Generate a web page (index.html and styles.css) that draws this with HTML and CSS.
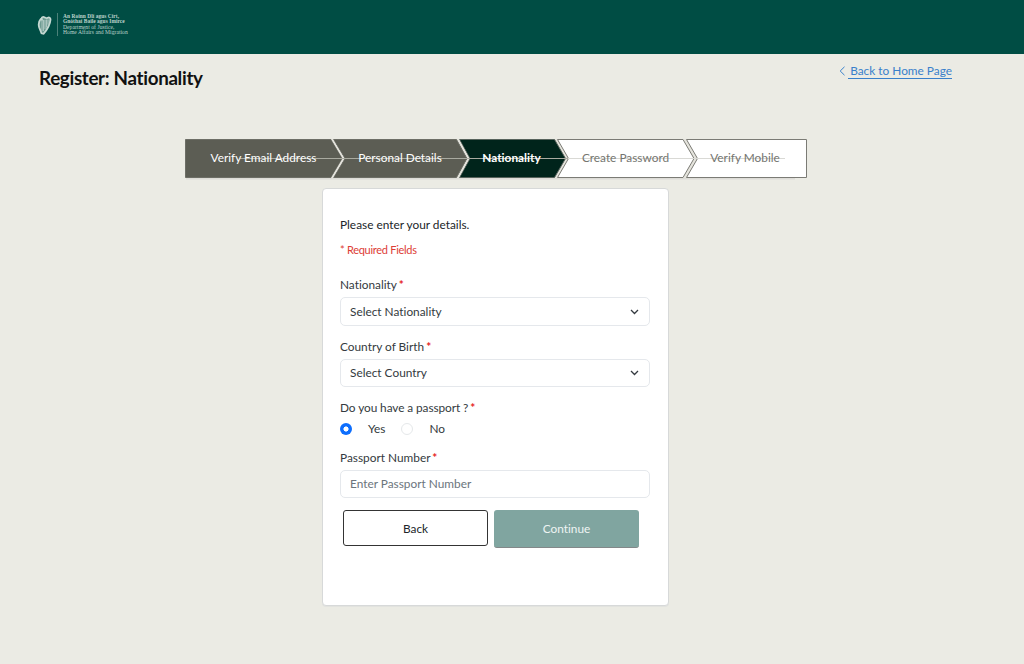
FILE: index.html
```html
<!DOCTYPE html>
<html lang="en">
<head>
<meta charset="utf-8">
<title>Register: Nationality</title>
<link rel="stylesheet" href="styles.css">
</head>
<body>
<header class="topbar">
  <svg class="harp" width="16" height="20" viewBox="0 0 16 20" aria-hidden="true">
    <path class="harp-frame" d="M4 3.500C1.800 6 1.300 9.500 2.200 12.500L4.500 18.300L6.500 18.800C9 16 13 10.500 13.500 4.600C13.600 2.700 12 2 10.800 2.800C9 4 7.200 1.300 5.700 2C4.300 2.500 4.300 4.500 5.500 5.200"/>
    <path class="harp-strings" d="M5 5v11M6.500 5v11M8 5v9M9.500 4.500v8M11 4.500v5"/>
  </svg>
  <span class="divider"></span>
  <div class="department">
    <b>An Roinn Dlí agus Cirt,</b>
    <b>Gnóthaí Baile agus Imirce</b>
    <span>Department of Justice,</span>
    <span>Home Affairs and Migration</span>
  </div>
</header>
<div class="heading">
  <h1>Register: Nationality</h1>
  <a class="home-link"><svg width="7" height="10" viewBox="0 0 7 10"><path d="M5.500 .8L1.200 5L5.500 9.200"/></svg><span>Back to Home Page</span></a>
</div>
<main>
  <ol class="steps">
    <svg class="steps-shape" width="622" height="42" viewBox="0 0 622 42" aria-hidden="true">
      <path class="shadow" d="M1 39.500H610"/>
      <path class="gap" d="M0 0H621V39H0Z"/>
      <path class="done" d="M.5 .5H146L157.500 19.500L146 38.500H.5Z"/>
      <path class="done" d="M148.500 .5H271.500L282 19.500L271.500 38.500H148.500L160 19.500Z"/>
      <path class="current" d="M274.500 .5H369.500L380.500 19.500L369.500 38.500H274.500L285 19.500Z"/>
      <path class="todo" d="M372.500 .5H498L509 19.500L498 38.500H372.500L383.500 19.500Z"/>
      <path class="todo" d="M501.500 .5H621.500V38.500H501.500L512.500 19.500Z"/>
      <path class="separator" d="M147 0L158.500 19.500L147 39M273 0L283.500 19.500L273 39"/>
      <path class="track" d="M55 19.500H383"/>
      <path class="track faint" d="M383 19.500H600"/>
    </svg>
    <li>Verify Email Address</li>
    <li>Personal Details</li>
    <li class="active">Nationality</li>
    <li class="next">Create Password</li>
    <li class="next">Verify Mobile</li>
  </ol>
  <form class="card">
    <p class="intro">Please enter your details.</p>
    <p class="required">* Required Fields</p>
    <label class="label">Nationality <i>*</i></label>
    <div class="field select"><span>Select Nationality</span><svg width="9" height="6" viewBox="0 0 9 6"><path d="M1 1L4.500 4.500L8 1"/></svg></div>
    <label class="label second">Country of Birth <i>*</i></label>
    <div class="field select short birth"><span>Select Country</span><svg width="9" height="6" viewBox="0 0 9 6"><path d="M1 1L4.500 4.500L8 1"/></svg></div>
    <label class="label third">Do you have a passport ? <i>*</i></label>
    <div class="radios"><span class="radio checked"></span><span class="yes">Yes</span><span class="radio"></span><span class="no">No</span></div>
    <label class="label fourth">Passport Number <i>*</i></label>
    <div class="field short placeholder"><span>Enter Passport Number</span></div>
    <div class="actions"><button type="button" class="back">Back</button><button type="button" class="continue">Continue</button></div>
  </form>
</main>
</body>
</html>
```
FILE: styles.css
```css
* { box-sizing: border-box; }
body { margin: 0; height: 664px; overflow: hidden; background: #ebebe4; color: #343a40; font: 11.850px/16px Lato, sans-serif; font-variant-ligatures: none; }
.topbar { height: 54px; background: #004d44; display: flex; align-items: flex-start; padding: 13px 0 0 37px; }
.harp { margin-top: 2px; fill: none; }
.harp-frame { stroke: #c5d8d2; stroke-width: 1.8; fill: #6c9a91; }
.harp-strings { stroke: #c5d8d2; stroke-width: .7; }
.divider { width: 1px; height: 23px; margin-left: 4px; background: #4c8179; }
.department { margin: 1px 0 0 5px; display: flex; flex-direction: column; color: #bdd3cc; font: 5.600px/5.350px "Liberation Serif", serif; letter-spacing: .04px; white-space: nowrap; }
.department b { font-size: 5.450px; }
.heading { display: flex; justify-content: space-between; padding: 0 72px 0 39px; height: 85px; }
h1 { margin: 12px 0 0; font-size: 18.800px; line-height: 24px; letter-spacing: -.320px; font-weight: 700; color: #111; }
.home-link { display: flex; margin-top: 8px; height: 17px; color: #3980cb; }
.home-link svg { margin: 4px 2px 0 0; fill: none; stroke: #3980cb; }
.home-link span { height: 17px; line-height: 17px; border-bottom: 1px solid #3980cb; padding-left: 2px; }
.steps { position: relative; display: grid; grid-template-columns: 157px 116px 107px 121px 118px; width: 622px; height: 39px; margin: 0 0 0 185px; padding: 0; list-style: none; text-align: center; color: #fff; line-height: 37px; }
.steps-shape { position: absolute; left: 0; top: 0; z-index: -1; }
.steps .active { font-weight: 700; }
.steps .next { color: #74756f; }
.shadow { stroke: #dddcd7; stroke-width: 2; }
.gap { fill: #e5e4dd; }
.separator { fill: none; stroke: #e5e4dd; stroke-width: 1.5; }
.done { fill: #5c5d54; stroke: #6d6e66; }
.current { fill: #00241b; stroke: #57635c; }
.todo { fill: #fff; stroke: #7b7b75; }
.track { stroke: #a9aaa0; }
.faint { stroke: #d9d9d5; }
.card { width: 347px; height: 418px; margin: 10px 0 0 322px; padding: 28px 18px 0 17px; background: #fff; border: 1px solid #d7d9d9; border-radius: 4px; box-shadow: 0 1px 0 #e2e3df; }
p { margin: 0; }
.intro { color: #212529; }
.required { color: #dd3d36; margin-top: 9px; font-size: 11px; letter-spacing: -.280px; }
.label { display: block; margin-top: 19px; }
.label i { color: #e51c1c; font-style: normal; font-weight: 700; margin-left: -1px; }
.field { height: 29px; margin-top: 4px; padding: 0 10px 0 9px; border: 1px solid #e5e8ec; border-radius: 5px; display: flex; align-items: center; justify-content: space-between; }
.short { height: 28px; margin-top: 4px; }
.birth { margin-top: 4px; }
.field svg { fill: none; stroke: #343a40; stroke-width: 1.3; }
.second { margin-top: 13px; }
.third { margin-top: 13px; letter-spacing: -.080px; }
.radios { display: flex; height: 16px; margin-top: 5px; align-items: center; }
.radio { width: 12px; height: 12px; border: 1px solid #e5e8ea; border-radius: 50%; }
.checked { border: 0; background: radial-gradient(circle, #fff 2.200px, #0d6efd 2.900px); }
.yes { margin: 0 16px 0 16px; }
.no { margin-left: 16px; }
.fourth { margin-top: 13px; }
.placeholder { color: #6c757d; }
.actions { display: flex; gap: 6px; margin: 12px 0 0 3px; }
button { width: 145px; height: 36px; padding: 0; border: 1px solid #343434; border-radius: 3px; background: #fff; color: #212529; font: inherit; }
.back { padding-top: 1px; }
.continue { height: 38px; background: #80a5a0; color: #eef4f3; border: 0; border-bottom: 1px solid #838889; }
```
